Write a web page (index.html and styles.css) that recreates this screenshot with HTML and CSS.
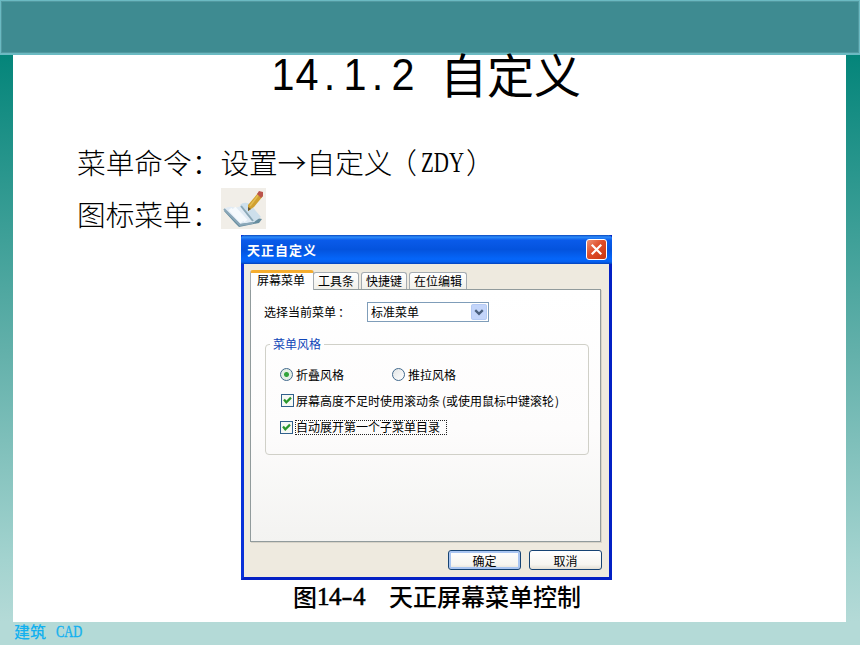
FILE: index.html
```html
<!DOCTYPE html>
<html lang="zh-CN">

<head>
<meta charset="UTF-8" />
<meta name="viewport" content="width=device-width, initial-scale=1.0" />
<title>14.1.2 自定义</title>
<link rel="stylesheet" href="styles.css">
</head>

<body>
<div class="slide">
<header class="banner"></header>

<main class="page">
<h1><span class="num"><i>1</i><i>4</i><i class="dot">.</i><i>1</i><i class="dot">.</i><i>2</i></span>自定义</h1>

<div class="intro">
<p>菜单命令：设置<span class="arrow">→</span>自定义<span class="open">（</span><span class="narrow"><span>ZDY</span></span><span class="shut">）</span></p>
<p>图标菜单：<svg class="toolIcon" viewBox="0 0 45 41">
<rect width="45" height="41" fill="#f1eee8" />
<path d="M3 23 L14 35 L18 39 L38 35 L41 31 L36 30 L27 20 L16 22 L10 20 Z" fill="#668c9e" />
<path d="M3 21 Q9 17 14 20 L20 18 L27 27 L34 34 L19 36 L12 29 Z" fill="#e1ebf4" />
<path d="M3 21 L13 31 L19 37 L32 35" fill="none" stroke="#8aa7b8" stroke-width="2" />
<path d="M19 17 Q23 13 29 16 L40 29 L33 34 L26 27 Z" fill="#cddfeb" />
<path d="M20 18 L32 33" stroke="#8aa7b6" stroke-width="2" />
<path d="M9 21 L21 34 M13 20 L25 33" stroke="#f6fafd" stroke-width="4" />
<path d="M27 23 L27 17 L37 5 L42 8 L33 19 Z" fill="#d0a030" />
<path d="M29 18 L38 6" stroke="#e4bd50" stroke-width="1.5" />
<path d="M36 6 L38 3 L42 4 L42 8 L40 10 Z" fill="#bb544c" />
<path d="M27 23 L27 19 L30 21 Z" fill="#675733" />
</svg></p>
</div>

<figure>
<div class="dialog">
<div class="titlebar">
<span>天正自定义</span>
<button class="close"><svg viewBox="0 0 20 20"><path d="M5 5 L15 15 M15 5 L5 15" stroke="#fff" stroke-width="2.3" /></svg></button>
</div>

<div class="dialogBody">
<div class="tabs">
<span class="tab active">屏幕菜单</span>
<span class="tab">工具条</span>
<span class="tab">快捷键</span>
<span class="tab last">在位编辑</span>
</div>

<div class="panel">
<div class="row">
<label>选择当前菜单<span class="colon">：</span></label>
<div class="select"><span>标准菜单</span>
<svg viewBox="0 0 17 17"><rect x=".5" y=".5" width="16" height="16" rx="1.5" fill="#c3d5fa" stroke="#b1c8f3" /><path d="M4.5 6.5 L8.5 10.5 L12.5 6.5" fill="none" stroke="#4a607f" stroke-width="2.4" /></svg>
</div>
</div>

<fieldset>
<legend>菜单风格</legend>
<div class="radios">
<label><i class="radio on"></i>折叠风格</label>
<label><i class="radio"></i>推拉风格</label>
</div>
<label class="check first"><svg viewBox="0 0 13 13"><rect x=".5" y=".5" width="12" height="12" fill="#f6f8f4" stroke="#31608c" /><path d="M3 5.5 L5.3 8.3 L10 3.6" fill="none" stroke="#29962b" stroke-width="2.2" /></svg><span>屏幕高度不足时使用滚动条<em>(</em>或使用鼠标中键滚轮<em class="end">)</em></span></label>
<label class="check"><svg viewBox="0 0 13 13"><rect x=".5" y=".5" width="12" height="12" fill="#f6f8f4" stroke="#31608c" /><path d="M3 5.5 L5.3 8.3 L10 3.6" fill="none" stroke="#29962b" stroke-width="2.2" /></svg><span class="focus">自动展开第一个子菜单目录</span></label>
</fieldset>
</div>

<div class="buttons">
<button class="btn default">确定</button>
<button class="btn">取消</button>
</div>
</div>
</div>
<figcaption>图<span class="figNum"><i>1</i><i>4</i><i class="dash">-</i><i>4</i></span>天正屏幕菜单控制</figcaption>
</figure>
</main>

<footer>建筑 <span class="narrow"><span>CAD</span></span></footer>
</div>
</body>

</html>
```
FILE: styles.css
```css
* {
margin: 0;
padding: 0;
box-sizing: border-box;
}

body {
font-family: "Liberation Serif", "Noto Sans CJK SC", sans-serif;
color: #000;
}

.slide {
width: 860px;
height: 645px;
overflow: hidden;
background: linear-gradient(#04857a 55px, #62b0aa 350px, #a3d3cf 560px, #b4dad7 622px);
}

.banner {
height: 55px;
background: #3e8b91;
border: 1px solid #6bbac2;
border-bottom-width: 2px;
box-shadow: inset 0 0 0 1px #5299a0;
}

.page {
height: 567px;
margin: 0 14px 0 13px;
background: #fff;
display: flow-root;
}

h1 {
width: 320px;
height: 58px;
margin: -11px 0 0 258px;
position: relative;
font: 400 47px/58px "Noto Sans CJK SC", sans-serif;
white-space: nowrap;
display: flex;
}

h1 .num {
width: 169px;
padding-top: 2px;
font-family: "Liberation Sans", sans-serif;
font-size: 45px;
display: flex;
}

h1 i {
width: 24px;
font-style: normal;
display: flex;
justify-content: center;
transform: scaleX(.92);
}

h1 .dot {
justify-content: flex-start;
padding-left: 4px;
}

.intro {
margin: 34px 0 0 64px;
font-size: 28.7px;
font-weight: 300;
}

.intro p {
height: 52px;
line-height: 52px;
display: flex;
white-space: nowrap;
font-family: "Noto Sans CJK SC", sans-serif;
}

.arrow {
width: 28.7px;
}

.open,
.shut {
font-feature-settings: "halt";
}

.open {
margin: 0 4px 0 10px;
}

.shut {
margin-left: 2px;
}

.narrow {
display: inline-block;
width: 43px;
font-family: "Liberation Serif", serif;
}

.narrow span {
display: inline-block;
transform: scaleX(.73);
transform-origin: left;
}

.toolIcon {
width: 45px;
height: 41px;
margin: 0 0 0 1px;
}

figure {
width: 371px;
margin: -5px 0 0 228px;
}

.dialog {
height: 345px;
border: 3px solid #0831d9;
border-top: 0;
border-right-color: #0320c4;
border-bottom-color: #0320c4;
background: #eeeadf;
font: 12px "Noto Sans CJK SC", sans-serif;
}

.titlebar {
height: 29px;
margin: 0 -3px;
padding: 0 5px 0 6px;
display: flex;
align-items: center;
justify-content: space-between;
color: #fff;
font-size: 13px;
font-weight: 700;
letter-spacing: 1px;
border-radius: 4px 4px 0 0;
background: linear-gradient(#0947bf, #2d8cfa 7%, #0a5bea 18%, #0453dd 50%, #0566fa 83%, #0560ef 93%, #0340b8);
}

.close {
width: 21px;
height: 21px;
border: 1px solid #fff;
border-radius: 3px;
background: linear-gradient(135deg, #ed9276, #df4d2a 45%, #c93610);
}

.close svg {
display: block;
}

.dialogBody {
padding: 6px 7px 0 6px;
}

.tabs {
height: 19px;
display: flex;
align-items: flex-end;
line-height: 16px;
position: relative;
}

.tab {
width: 46px;
height: 17px;
margin-right: 2px;
padding-left: 4px;
border: 1px solid #a5acb2;
border-bottom: 0;
border-radius: 3px 3px 0 0;
background: linear-gradient(#fff, #f1f0ea);
white-space: nowrap;
}

.tab.active {
width: 64px;
height: 20px;
margin: 0 -1px -1px 0;
padding-left: 6px;
line-height: 14px;
border-top: 3px solid #f5ad2e;
background: #fefefe;
}

.tab.last {
width: 58px;
}

.panel {
width: 351px;
height: 253px;
padding: 12px 12px 0 13px;
border: 1px solid #919b9c;
box-shadow: 1px 1px 0 #d7d3c8;
background: linear-gradient(#fff, #fdfcfc 55%, #f3f3f1);
}

.row {
height: 20px;
display: flex;
align-items: center;
}

.row label {
width: 103px;
padding-bottom: 2px;
}

.colon {
margin-left: 2px;
}

.select {
width: 122px;
height: 20px;
padding: 0 1px 0 3px;
border: 1px solid #7f9db9;
background: #fff;
display: flex;
align-items: center;
justify-content: space-between;
line-height: 16px;
}

.select span {
padding-bottom: 1px;
}

.select svg {
width: 16px;
height: 16px;
}

fieldset {
width: 324px;
height: 120px;
margin: 13px 0 0 1px;
padding: 0 0 0 14px;
border: 1px solid #d0d0c8;
border-radius: 4px;
}

legend {
height: 18px;
margin-left: -10px;
padding: 0 3px;
color: #1046b8;
line-height: 17px;
}

.radios {
display: flex;
margin-top: 12px;
}

.radios label {
width: 112px;
height: 18px;
display: flex;
align-items: center;
}

.radio {
width: 13px;
height: 13px;
margin-right: 3px;
border: 1px solid #41698c;
border-radius: 50%;
background: linear-gradient(135deg, #e2e5e5, #fff);
}

.radio.on {
background: radial-gradient(circle, #31a33a 0 2px, #e4eee5 3px);
}

.check {
height: 18px;
margin-top: 9px;
display: flex;
align-items: center;
white-space: nowrap;
}

.check svg {
width: 13px;
height: 13px;
margin-right: 2px;
}

.check.first {
margin: 8px 0 0 1px;
}

.check em {
display: inline-block;
width: 6px;
font-style: normal;
text-align: right;
}

.check em.end {
padding-left: 1px;
text-align: left;
}

.focus {
width: 152px;
height: 15px;
line-height: 12px;
border: 1px dotted #222;
}

.buttons {
display: flex;
justify-content: flex-end;
gap: 8px;
margin-top: 8px;
}

.btn {
width: 73px;
height: 20px;
border: 1px solid #164373;
border-radius: 3px;
background: linear-gradient(#fff, #f6f5f0 75%, #e3dfd5);
font: 12px/15px "Noto Sans CJK SC", sans-serif;
color: #000;
}

.btn.default {
box-shadow: inset 0 0 0 2px #a9c5f1;
}

figcaption {
margin-left: 52px;
display: flex;
font: 500 24px/31px "Noto Sans CJK SC", sans-serif;
white-space: nowrap;
}

.figNum {
width: 72px;
font-family: "Liberation Serif", serif;
font-size: 25px;
line-height: 33px;
font-weight: 400;
-webkit-text-stroke: .6px #000;
display: flex;
}

.figNum i {
width: 12px;
font-style: normal;
text-align: center;
}

.figNum .dash {
transform: scaleX(1.3);
}

footer {
height: 23px;
padding-left: 14px;
color: #12b0ef;
font: 500 16px/19px "Noto Sans CJK SC", sans-serif;
display: flex;
gap: 10px;
}

footer .narrow {
font-size: 17px;
-webkit-text-stroke: .4px #12b0ef;
}
```
